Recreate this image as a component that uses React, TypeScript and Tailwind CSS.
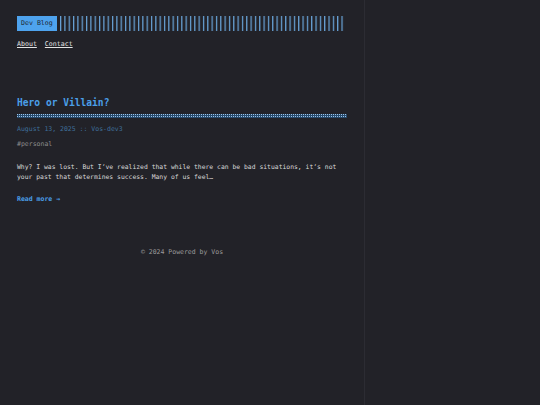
import React from "react";

const mono = { fontFamily: '"DejaVu Sans Mono", "Liberation Mono", monospace' };

export default function App() {
  return (
    <div className="min-h-[405px] w-full bg-[#222228]" style={mono}>
      <div className="flex min-h-[405px] w-[365px] flex-col border-r border-[#2c2c33] px-[17px] pt-[16px]">
        <header>
          <div className="flex h-[15px] items-stretch">
            <span className="flex items-center bg-[#4ea3ee] px-[4px] text-[6.6px] text-[#1d2733]">
              Dev Blog
            </span>
            <svg className="ml-[3px] h-[15px] w-[285px]" viewBox="0 0 285 15" preserveAspectRatio="none">
              <defs>
                <pattern id="bars" width="4.33" height="15" patternUnits="userSpaceOnUse">
                  <rect x="0" y="0" width="1.2" height="15" fill="#6aa6dc" />
                </pattern>
              </defs>
              <rect x="0" y="0" width="285" height="15" fill="url(#bars)" />
            </svg>
          </div>
          <nav className="mt-[9px] flex gap-[8px] text-[6.6px] text-[#e4e4e4]">
            <a className="underline underline-offset-[1px]">About</a>
            <a className="underline underline-offset-[1px]">Contact</a>
          </nav>
        </header>
        <main className="mt-[47px]">
          <h1 className="text-[9.6px] font-bold leading-[12px] text-[#4a9fe8]">Hero or Villain?</h1>
          <svg className="mt-[5px] block h-[4px] w-[330px]" viewBox="0 0 330 4">
            <rect x="0" y="0" width="330" height="4" fill="#27496a" />
            <defs>
              <pattern id="dots" width="2" height="2" patternUnits="userSpaceOnUse">
                <rect x="0" y="0" width="1" height="1" fill="#9cc4ea" />
              </pattern>
            </defs>
            <rect x="0" y="0" width="330" height="4" fill="url(#dots)" />
          </svg>
          <div className="mt-[6px] text-[6.5px] leading-[10px] text-[#3f6f9b]">August 13, 2025 :: Vos-dev3</div>
          <div className="mt-[5px] text-[6.5px] leading-[10px] text-[#8c8c8c]">#personal</div>
          <p className="mt-[13px] text-[6.4px] leading-[10px] text-[#d8d8d8]">
            Why? I was lost. But I’ve realized that while there can be bad situations, it’s not your past that determines success. Many of us feel…
          </p>
          <div className="mt-[12px] text-[6.5px] font-bold leading-[10px] text-[#4a9fe8]">Read more →</div>
        </main>
        <footer className="mt-[43px] text-center text-[6.5px] leading-[10px] text-[#9a9a9a]">© 2024 Powered by Vos</footer>
      </div>
    </div>
  );
}
